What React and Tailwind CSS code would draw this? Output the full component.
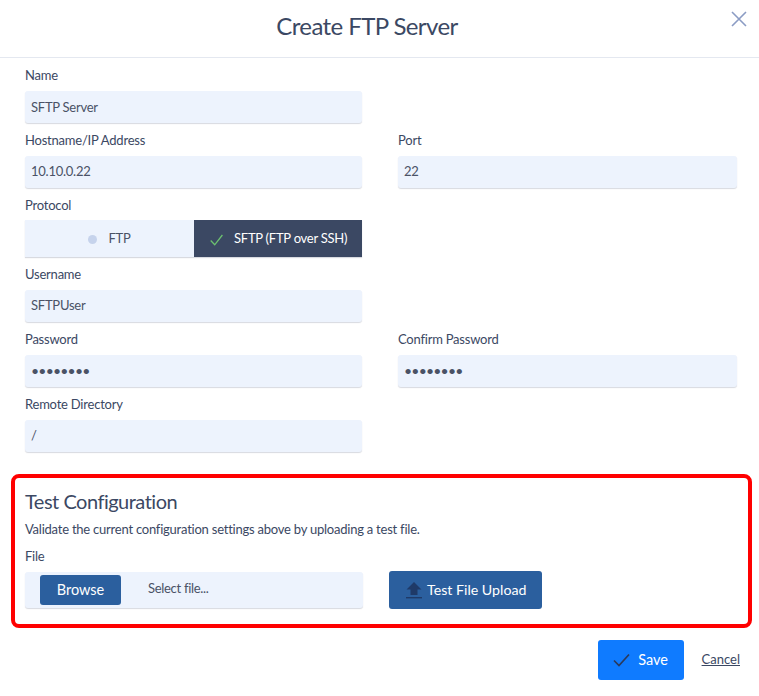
import React from 'react'

const Field = ({ label, value, className = '', valueClassName = '' }) => (
  <div className={`flex flex-col ${className}`}>
    <label className="h-[26px] text-[13px] leading-[20px] tracking-[-0.22px] text-[#3b4863]">{label}</label>
    <div className={`flex h-8 items-center rounded-[3px] bg-[#edf3fd] px-[6px] text-[13px] tracking-[-0.25px] text-[#4a5266] shadow-[0_1px_1px_rgba(60,72,99,0.2)] ${valueClassName}`}>
      {value}
    </div>
  </div>
)

const Dots = () => <span className="text-sm tracking-[-0.8px] text-[#4a5266]">••••••••</span>

export default function App() {
  return (
    <div className="relative h-[696px] w-[759px] overflow-hidden bg-white font-['Lato',sans-serif] text-[#3b4863]">
      {/* Header */}
      <div className="flex h-[58px] items-center justify-center border-b border-[#e4e8f0] pb-[6px] pr-[25px]">
        <h1 className="text-2xl font-normal tracking-[-0.6px]">Create FTP Server</h1>
      </div>
      <button className="absolute right-[11px] top-[10px] text-[#8b9cc4]">
        <svg width="18" height="18" viewBox="0 0 18 18" fill="none" stroke="currentColor" strokeWidth="1.6">
          <path d="M2 2l14 14M16 2L2 16" />
        </svg>
      </button>

      <div className="flex flex-col pl-[25px] pr-[22px] pt-[7px]">
        <div className="w-[337px]">
          <Field label="Name" value="SFTP Server" valueClassName="pt-px" />
        </div>
        <div className="mt-[7px] flex gap-[36px]">
          <Field label="Hostname/IP Address" value="10.10.0.22" className="w-[337px]" />
          <Field label="Port" value="22" className="w-[339px]" />
        </div>

        {/* Protocol */}
        <div className="mt-[7px] w-[337px]">
          <div className="h-[25px] text-[13px] leading-[20px] tracking-[-0.22px]">Protocol</div>
          <div className="flex h-[37px] text-[13px] tracking-[-0.25px] shadow-[0_1px_1px_rgba(60,72,99,0.2)]">
            <div className="flex w-[169px] items-center justify-center gap-[11px] bg-[#edf3fd] text-[#4a5266]">
              <span className="mt-0.5 h-[9px] w-[9px] rounded-full bg-[#c6d3ec]"></span>
              FTP
            </div>
            <div className="flex flex-1 items-center gap-[11px] bg-[#3b4863] pl-[16px] text-white">
              <svg width="13" height="12" viewBox="0 0 13 12" fill="none" stroke="#6cc070" strokeWidth="1.3" className="mt-[3px]">
                <path d="M0.7 6.5l4 4.3L12.4 1" />
              </svg>
              SFTP (FTP over SSH)
            </div>
          </div>
        </div>

        <div className="mt-[7px] w-[337px]">
          <Field label="Username" value="SFTPUser" />
        </div>
        <div className="mt-[7px] flex gap-[36px]">
          <Field label="Password" value={<Dots />} className="w-[337px]" />
          <Field label="Confirm Password" value={<Dots />} className="w-[339px]" />
        </div>
        <div className="mt-[7px] w-[337px]">
          <Field label="Remote Directory" value="/" />
        </div>
      </div>

      {/* Test Configuration */}
      <div className="ml-[11px] mr-[7px] mt-[22px] h-[154px] rounded-lg border-4 border-[#ff0000] pl-[10px] pt-[10px]">
        <h2 className="text-xl font-normal leading-[26px] tracking-[-0.5px]">Test Configuration</h2>
        <p className="mt-[5px] text-[13px] leading-[20px] tracking-[-0.23px]">Validate the current configuration settings above by uploading a test file.</p>
        <div className="mt-[7px] text-[13px] leading-[20px] tracking-[-0.22px]">File</div>
        <div className="mt-[5px] flex items-center">
          <div className="flex h-[36px] w-[338px] items-start rounded-[3px] bg-[#edf3fd] pl-[15px] pt-[3px] shadow-[0_1px_1px_rgba(60,72,99,0.2)]">
            <button className="h-[30px] w-[81px] rounded-[3px] bg-[#2b5f9e] text-[14.5px] text-white">Browse</button>
            <span className="ml-[27px] mt-[4px] text-[13px] tracking-[-0.3px] text-[#4a5266]">Select file...</span>
          </div>
          <button className="ml-[26px] flex h-[38px] w-[153px] items-center gap-[5px] rounded-[3px] bg-[#2b5f9e] pl-[17px] text-[14.2px] text-white">
            <svg width="16" height="18" viewBox="0 0 16 18" fill="#1f3a68">
              <path d="M8 1L0.5 8.5H4.5V14H11.5V8.5H15.5Z" />
              <rect x="0" y="16" width="16" height="1.4" />
            </svg>
            Test File Upload
          </button>
        </div>
      </div>

      {/* Footer */}
      <div className="mt-[12px] flex items-center justify-end pr-[19px]">
        <button className="flex h-10 w-[86px] items-center justify-center gap-[8px] rounded-[3px] bg-[#0f7bff] text-[14.5px] text-white">
          <svg width="17" height="14" viewBox="0 0 17 14" fill="none" stroke="#2b3a5c" strokeWidth="1.7">
            <path d="M1 7.5l5 5L16 1.5" />
          </svg>
          Save
        </button>
        <a className="ml-[18px] text-[13px] text-[#3b4863] underline">Cancel</a>
      </div>
    </div>
  )
}
